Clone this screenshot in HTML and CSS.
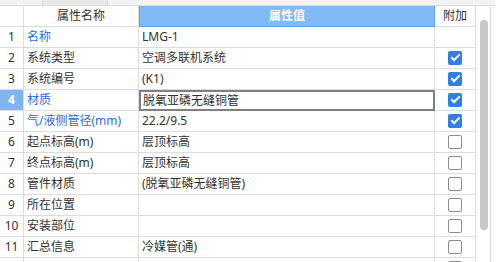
FILE: index.html
```html
<!DOCTYPE html>
<html lang="zh">
<head>
    <meta charset="UTF-8">
    <title>属性</title>
    <link rel="stylesheet" href="styles.css">
</head>
<body>
    <div class="topbar">
        <span class="tab-a"></span>
        <span class="tab-b"></span>
    </div>
    <div class="frame">
        <div class="grid">
            <div class="row head">
                <div class="cell num"></div>
                <div class="cell name">属性名称</div>
                <div class="cell value active">属性值</div>
                <div class="cell add">附加</div>
            </div>
            <div class="row">
                <div class="cell num">1</div>
                <div class="cell name blue">名称</div>
                <div class="cell value">LMG-1</div>
                <div class="cell add"></div>
            </div>
            <div class="row">
                <div class="cell num">2</div>
                <div class="cell name">系统类型</div>
                <div class="cell value">空调多联机系统</div>
                <div class="cell add"><span class="box on"></span></div>
            </div>
            <div class="row">
                <div class="cell num">3</div>
                <div class="cell name">系统编号</div>
                <div class="cell value">(K1)</div>
                <div class="cell add"><span class="box on"></span></div>
            </div>
            <div class="row selected">
                <div class="cell num">4</div>
                <div class="cell name blue">材质</div>
                <div class="cell value editing">脱氧亚磷无缝铜管</div>
                <div class="cell add"><span class="box on"></span></div>
            </div>
            <div class="row">
                <div class="cell num">5</div>
                <div class="cell name blue">气/液侧管径(mm)</div>
                <div class="cell value">22.2/9.5</div>
                <div class="cell add"><span class="box on"></span></div>
            </div>
            <div class="row">
                <div class="cell num">6</div>
                <div class="cell name">起点标高(m)</div>
                <div class="cell value">层顶标高</div>
                <div class="cell add"><span class="box"></span></div>
            </div>
            <div class="row">
                <div class="cell num">7</div>
                <div class="cell name">终点标高(m)</div>
                <div class="cell value">层顶标高</div>
                <div class="cell add"><span class="box"></span></div>
            </div>
            <div class="row">
                <div class="cell num">8</div>
                <div class="cell name">管件材质</div>
                <div class="cell value">(脱氧亚磷无缝铜管)</div>
                <div class="cell add"><span class="box"></span></div>
            </div>
            <div class="row">
                <div class="cell num">9</div>
                <div class="cell name">所在位置</div>
                <div class="cell value"></div>
                <div class="cell add"><span class="box"></span></div>
            </div>
            <div class="row">
                <div class="cell num">10</div>
                <div class="cell name">安装部位</div>
                <div class="cell value"></div>
                <div class="cell add"><span class="box"></span></div>
            </div>
            <div class="row">
                <div class="cell num">11</div>
                <div class="cell name">汇总信息</div>
                <div class="cell value">冷媒管(通)</div>
                <div class="cell add"><span class="box"></span></div>
            </div>
            <!-- next row only peeks in at the bottom edge -->
            <div class="row tail">
                <div class="cell num"></div>
                <div class="cell name"></div>
                <div class="cell value"></div>
                <div class="cell add"><span class="box"></span></div>
            </div>
        </div>
        <div class="scroll">
            <div class="thumb"></div>
        </div>
        <div class="edge"></div>
    </div>
</body>
</html>
```

FILE: styles.css
```css
html, body {
    margin: 0;
    height: 262px;
    overflow: hidden;
    background-color: #fff;
}
body {
    font-family: "Noto Sans", "Noto Sans CJK SC", sans-serif;
    font-size: 12px;
    color: #333;
}
.topbar {
    height: 5px;
    background-color: #f3f3f3;
    border-bottom: 1px solid #dcdcdc;
    display: flex;
}
.tab-a {
    width: 42px;
    border-right: 1px solid #d6d6d6;
}
.tab-b {
    width: 64px;
    background-color: #e8e8e8;
    border-right: 1px solid #d6d6d6;
}
.frame {
    display: flex;
    height: 256px;
}
.grid {
    width: 476px;
}
.row {
    display: flex;
    height: 21px;
}
.cell {
    box-sizing: border-box;
    height: 21px;
    line-height: 20px;
    border-right: 1px solid #dcdcdc;
    border-bottom: 1px solid #dcdcdc;
    white-space: nowrap;
    overflow: hidden;
}
.num {
    width: 24px;
    text-align: center;
}
.name {
    width: 115px;
    padding-left: 3px;
}
.value {
    width: 296px;
    padding-left: 3px;
}
.add {
    width: 41px;
    display: flex;
    align-items: center;
    justify-content: center;
}
.head .name,
.head .add {
    text-align: center;
    padding-left: 0;
}
.head .value.active {
    background-color: #80bbf6;
    border: 1px solid #5fa3ec;
    border-top: none;
    color: #fff;
    font-weight: bold;
    text-align: center;
    padding-left: 0;
}
.blue {
    color: #2a6fdb;
}
.selected .num {
    background-color: #80b5ef;
    color: #fff;
    font-weight: bold;
}
.value.editing {
    border: 2px solid #808080;
    line-height: 17px;
    padding-left: 2px;
}
.tail {
    height: 4px;
    overflow: hidden;
}
.tail .cell {
    height: 4px;
    border-bottom: none;
    align-items: flex-start;
    padding-top: 3px;
}
.box {
    box-sizing: border-box;
    width: 14px;
    height: 14px;
    flex-shrink: 0;
    border: 1px solid #8c8c8c;
    border-radius: 2px;
    background-color: #fff;
}
.box.on {
    border: none;
    background-color: #2f7fe6;
    position: relative;
}
.box.on::after {
    content: "";
    position: absolute;
    left: 3px;
    top: 3px;
    width: 7px;
    height: 3px;
    border-left: 2px solid #fff;
    border-bottom: 2px solid #fff;
    transform: rotate(-45deg);
}
.scroll {
    width: 15px;
    border-right: 1px solid #dcdcdc;
    padding: 14px 0 0 4px;
    box-sizing: border-box;
}
.thumb {
    width: 8px;
    height: 210px;
    background-color: #c8c8c8;
    border-radius: 4px;
}
.edge {
    width: 4px;
    background-color: #fafafa;
}
```
